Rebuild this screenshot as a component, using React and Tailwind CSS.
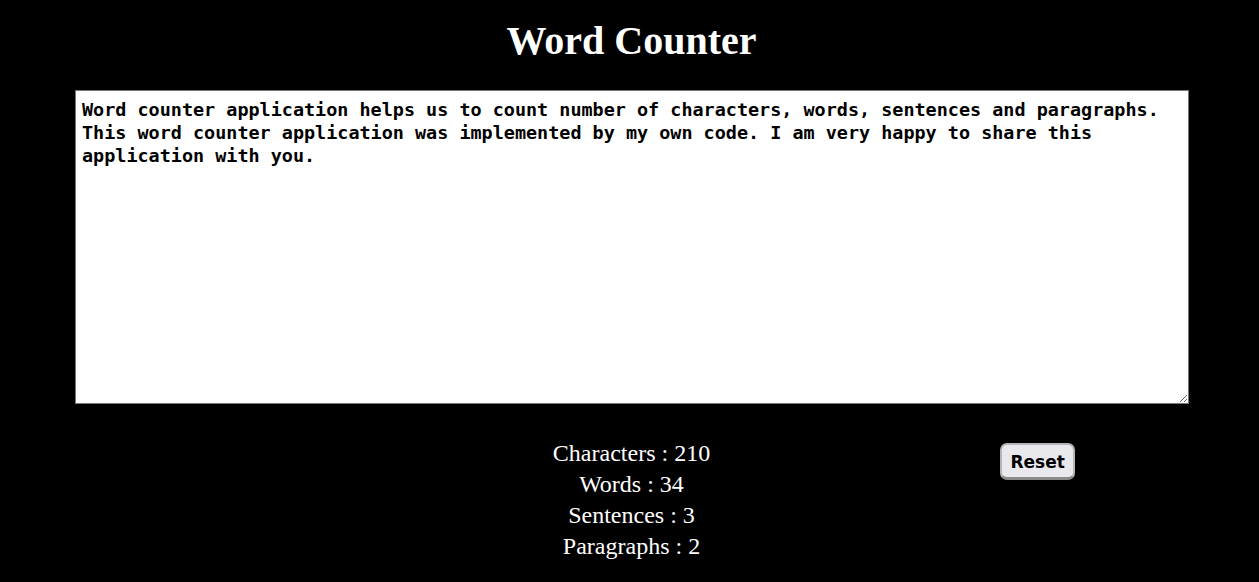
import { useState } from 'react';

const initialText =
  'Word counter application helps us to count number of characters, words, sentences and paragraphs.\nThis word counter application was implemented by my own code. I am very happy to share this application with you.';

export default function App() {
  const [text, setText] = useState(initialText);

  // counts shown under the textarea
  const characters = 210;
  const words = 34;
  const sentences = 3;
  const paragraphs = 2;

  return (
    <div className="min-h-[582px] bg-black text-white">
      <h1 className="pl-[4px] pt-[18px] text-center font-['Liberation_Serif',serif] text-[40px] font-bold leading-[46px]">
        Word Counter
      </h1>

      <div className="pl-[75px] pt-[26px]">
        <textarea
          value={text}
          onChange={(e) => setText(e.target.value)}
          className="block h-[314px] w-[1114px] resize border border-[#767676] bg-white px-[6px] py-[7px] font-['DejaVu_Sans_Mono',monospace] text-[18.45px] font-bold leading-[23px] text-black outline-none"
        />
      </div>

      <div className="grid grid-cols-[1fr_auto_1fr] pl-[4px] pt-[34px]">
        <div />
        <div className="text-center font-['Liberation_Serif',serif] text-[24px] leading-[31px]">
          <div>Characters : {characters}</div>
          <div>Words : {words}</div>
          <div>Sentences : {sentences}</div>
          <div>Paragraphs : {paragraphs}</div>
        </div>
        <div className="pl-[290px] pt-[5px]">
          <button
            onClick={() => setText('')}
            className="h-[37px] w-[75px] rounded-[7px] border-2 border-b-[3px] border-[#b5b5b5] border-b-[#8a8a8a] bg-[#e9e9ed] pt-[3px] font-['DejaVu_Sans',sans-serif] text-[17px] font-bold text-black"
          >
            Reset
          </button>
        </div>
      </div>
    </div>
  );
}
